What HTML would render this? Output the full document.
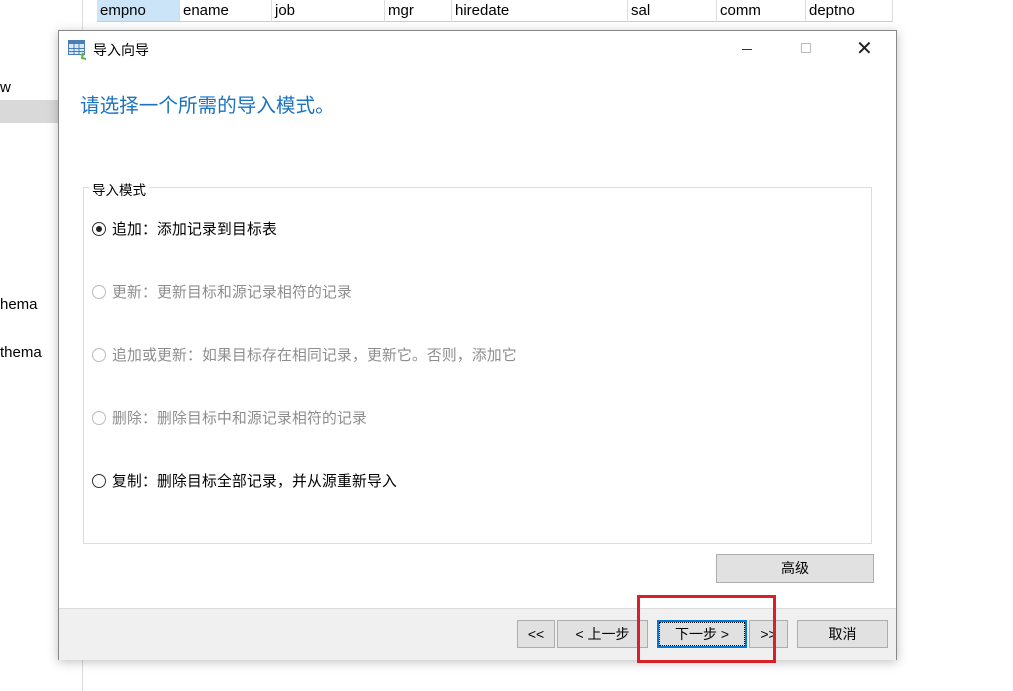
<!DOCTYPE html><html><head><meta charset="utf-8"><style>
body{margin:0;width:1013px;height:691px;position:relative;overflow:hidden;background:#fff;font-family:"Liberation Sans","Noto Sans CJK SC",sans-serif;font-size:14px;color:#000}
.a{position:absolute}
.th{position:absolute;top:0;height:22px;line-height:22px;border-right:1px solid #ddd;border-bottom:1px solid #ccc;padding-left:3px;box-sizing:border-box;font-size:15px;background:#fff}
.btn{position:absolute;background:#e1e1e1;border:1px solid #adadad;box-sizing:border-box;text-align:center;font-size:14px;line-height:26px;color:#000}
.r{position:absolute;left:91px;font-size:14.8px;line-height:16px;letter-spacing:0.2px}
.r i{display:inline-block;width:14px;height:14px;border:1px solid #333;border-radius:50%;vertical-align:-2px;margin-right:6px;box-sizing:border-box;position:relative}
.d{color:#8d8d8d}.d i{border-color:#bbb}
</style></head><body>
<div class="a" style="left:82px;top:0;width:1px;height:691px;background:#ddd"></div>
<div class="a" style="left:0;top:100px;width:58px;height:23px;background:#d9d9d9"></div>
<div class="a" style="left:0;top:79px;font-size:15px">w</div>
<div class="a" style="left:0;top:296px;font-size:15px">hema</div>
<div class="a" style="left:0;top:344px;font-size:15px">thema</div>
<div class="th" style="left:97px;width:83px;background:#cce4f7">empno</div>
<div class="th" style="left:180px;width:92px">ename</div>
<div class="th" style="left:272px;width:113px">job</div>
<div class="th" style="left:385px;width:67px">mgr</div>
<div class="th" style="left:452px;width:176px">hiredate</div>
<div class="th" style="left:628px;width:89px">sal</div>
<div class="th" style="left:717px;width:89px">comm</div>
<div class="th" style="left:806px;width:87px">deptno</div>
<div class="a" style="left:58px;top:30px;width:839px;height:630px;border:1px solid #888;box-sizing:border-box;background:#fff;box-shadow:0 2px 10px rgba(0,0,0,.25)">
<svg class="a" style="left:9px;top:9px" width="20" height="20" viewBox="0 0 20 20"><rect x="0" y="0" width="17" height="15" fill="#4a7fb5"/><rect x="1" y="4" width="15" height="10" fill="#dbe8f5"/><path d="M1 8.5h15M1 11.5h15M6 4v10M11 4v10" stroke="#4a7fb5" stroke-width="1"/><path d="M18 19l-4-1 1-5" stroke="#6ab04c" stroke-width="2" fill="none"/><path d="M11 15l4-2 1 3z" fill="#6ab04c"/></svg>
<div class="a" style="left:34px;top:9px;font-size:14px">导入向导</div>
<div class="a" style="left:683px;top:18px;width:10px;height:1px;background:#333"></div>
<div class="a" style="left:742px;top:12px;width:10px;height:10px;border:1px solid #bbb;box-sizing:border-box"></div>
<div class="a" style="left:797px;top:5px;font-size:20px;color:#222">✕</div>
<div class="a" style="left:21px;top:58px;font-size:19.6px;color:#1a73c0">请选择一个所需的导入模式。</div>
<div class="a" style="left:24px;top:156px;width:789px;height:357px;border:1px solid #dcdcdc;box-sizing:border-box"></div>
<div class="a" style="left:30px;top:148px;background:#fff;padding:0 3px;font-size:13.5px">导入模式</div>
<div class="r" style="top:191px;left:33px"><i><b style="position:absolute;left:3px;top:3px;width:6px;height:6px;border-radius:50%;background:#222"></b></i>追加：添加记录到目标表</div>
<div class="r d" style="top:254px;left:33px"><i></i>更新：更新目标和源记录相符的记录</div>
<div class="r d" style="top:317px;left:33px"><i></i>追加或更新：如果目标存在相同记录，更新它。否则，添加它</div>
<div class="r d" style="top:380px;left:33px"><i></i>删除：删除目标中和源记录相符的记录</div>
<div class="r" style="top:443px;left:33px"><i></i>复制：删除目标全部记录，并从源重新导入</div>
<div class="btn" style="left:657px;top:523px;width:158px;height:29px">高级</div>
<div class="a" style="left:0;top:577px;width:837px;height:51px;background:#f0f0f0;border-top:1px solid #dcdcdc"></div>
<div class="btn" style="left:458px;top:589px;width:38px;height:28px">&lt;&lt;</div>
<div class="btn" style="left:498px;top:589px;width:91px;height:28px">&lt; 上一步</div>
<div class="btn" style="left:598px;top:589px;width:90px;height:28px;border:2px solid #0078d7;line-height:24px"><span style="outline:1px dotted #000;outline-offset:0;display:block;margin:1px;line-height:22px">下一步 &gt;</span></div>
<div class="btn" style="left:690px;top:589px;width:39px;height:28px">&gt;&gt;</div>
<div class="btn" style="left:738px;top:589px;width:91px;height:28px">取消</div>
</div>
<div class="a" style="left:637px;top:595px;width:139px;height:68px;border:3px solid #d9202a;box-sizing:border-box"></div>
</body></html>
